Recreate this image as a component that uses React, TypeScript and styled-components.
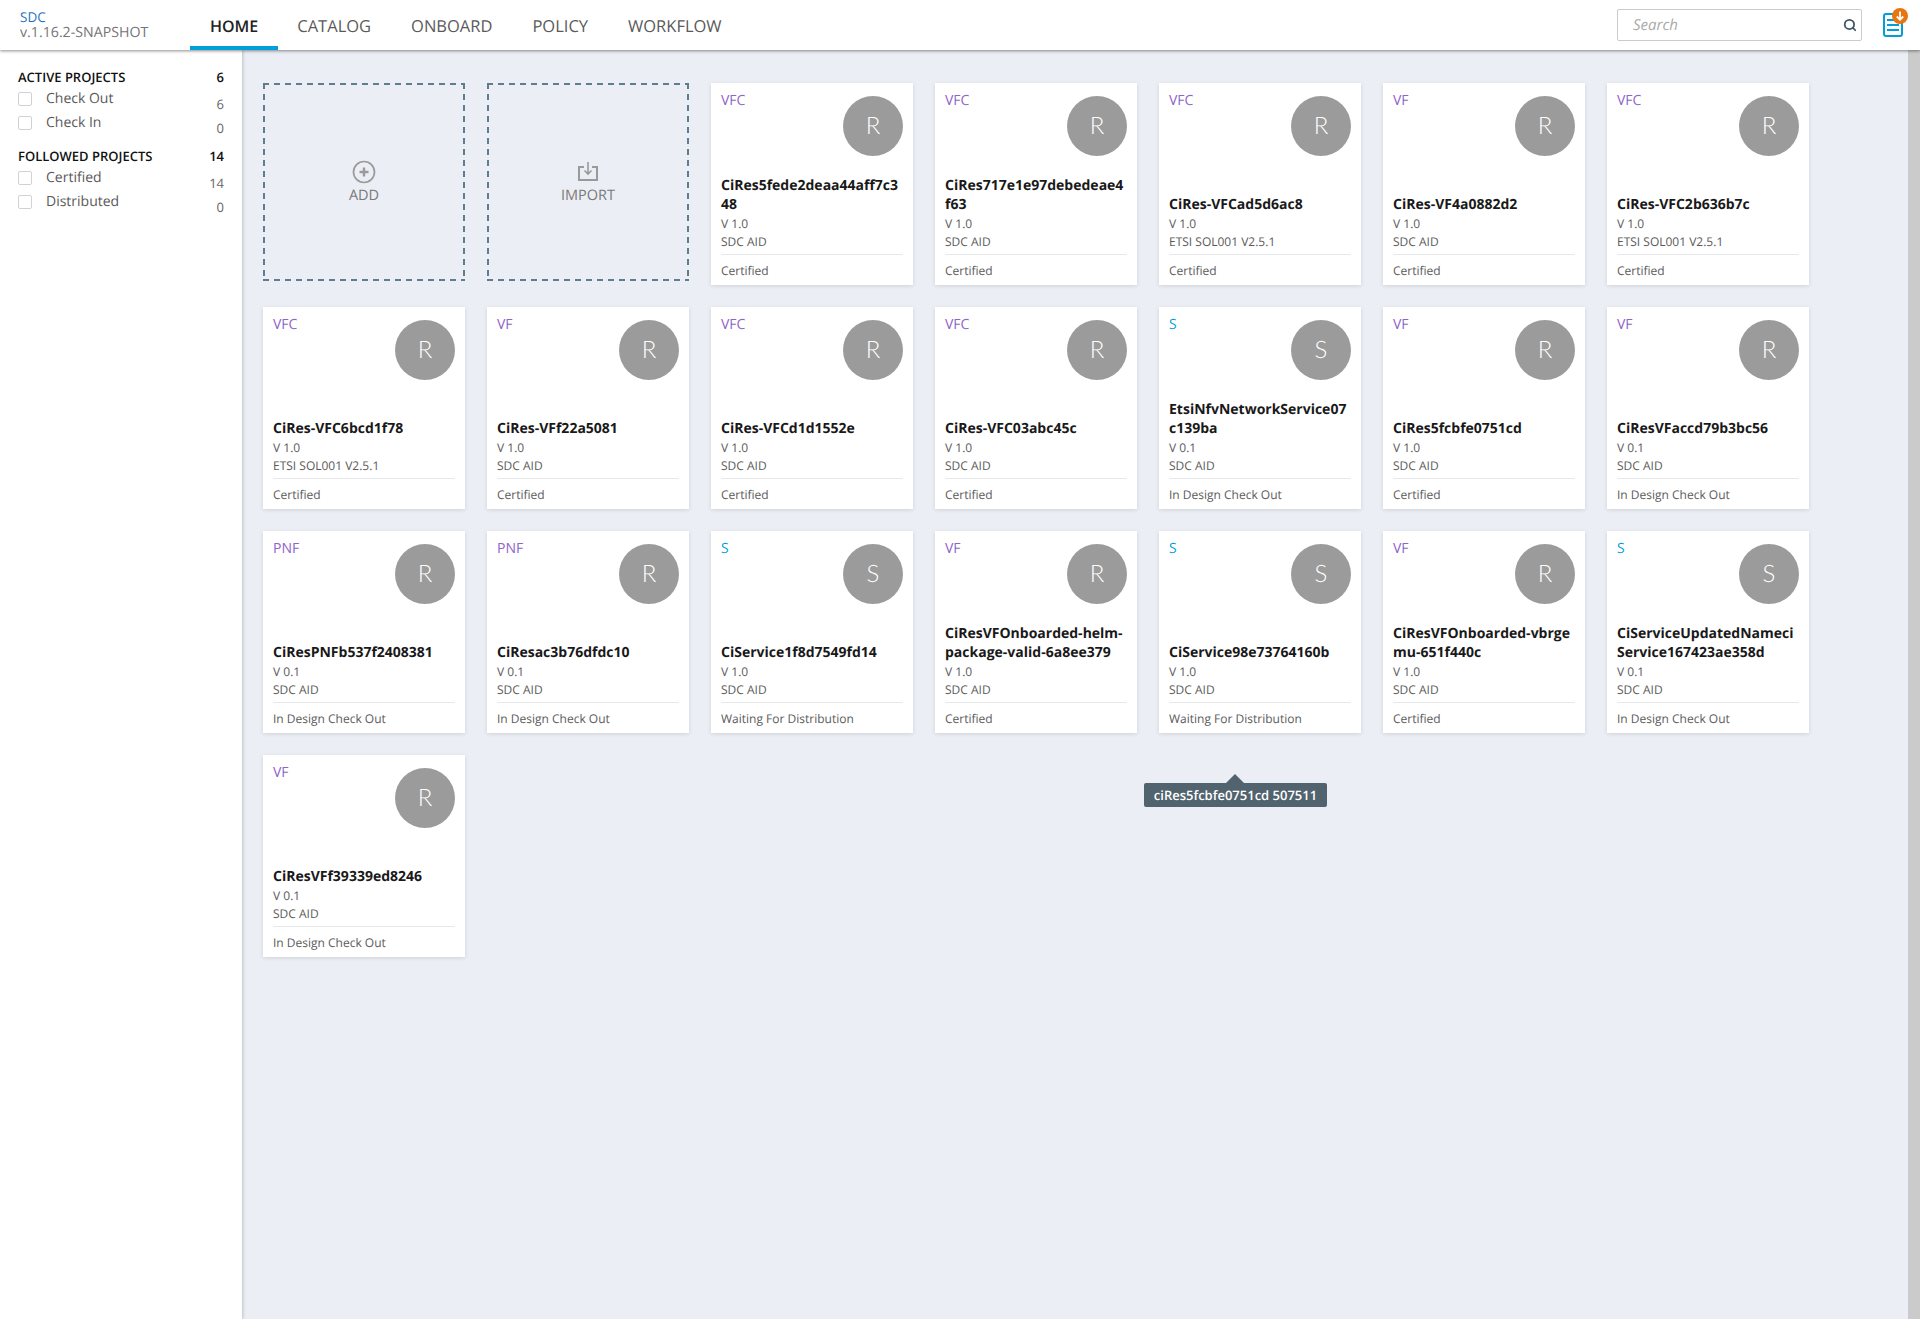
import styled, { createGlobalStyle } from "styled-components";
import { Search } from "lucide-react";

const GlobalStyle = createGlobalStyle`
    html, body {
        margin: 0;
        height: 100%;
        overflow: hidden;
        font-family: "Open Sans", "Liberation Sans", sans-serif;
        background-color: #ebeef4;
        text-rendering: geometricPrecision;
    }
    * { box-sizing: border-box; }
`;

const Page = styled.div`
    width: 1920px;
    height: 1319px;
    display: flex;
    flex-direction: column;
    position: relative;
`;
const Header = styled.header`
    height: 50px;
    flex: none;
    display: flex;
    align-items: stretch;
    background-color: #fff;
    box-shadow: 0 1px 3px rgba(0, 0, 0, 0.45);
    position: relative;
    z-index: 2;
`;
const Brand = styled.div`
    width: 190px;
    flex: none;
    padding: 10px 0 0 20px;
    font-size: 14.2px;
    line-height: 15px;
    color: #757575;
`;
const BrandName = styled.div`
    color: #1f72b8;
    font-size: 13.5px;
`;
const Nav = styled.nav`
    display: flex;
`;
const NavItem = styled.a<{ $active?: boolean }>`
    padding: 16px 20px 0;
    margin-right: ${(p) => (p.$active ? "-1px" : "0")};
    font-size: ${(p) => (p.$active ? "16px" : "16.5px")};
    line-height: 20px;
    font-weight: ${(p) => (p.$active ? 600 : 500)};
    color: ${(p) => (p.$active ? "#222" : "#5a5a5a")};
    border-bottom: 4px solid ${(p) => (p.$active ? "#009fdb" : "transparent")};
`;
const HeaderRight = styled.div`
    margin-left: auto;
    display: flex;
    align-items: flex-start;
    padding: 8px 12px 0 0;
    gap: 20px;
`;
const SearchBox = styled.div`
    width: 245px;
    height: 32px;
    margin-top: 1px;
    border: 1px solid #c8cccf;
    border-radius: 2px;
    display: flex;
    align-items: center;
    justify-content: space-between;
    padding: 0 4px 0 15px;
    font-size: 15px;
    font-style: italic;
    color: #aaa;
    svg { color: #3f5364; }
`;
const Body = styled.div`
    flex: 1;
    display: flex;
    min-height: 0;
`;
const Sidebar = styled.aside`
    width: 242px;
    flex: none;
    background-color: #fff;
    box-shadow: 1px 0 3px rgba(0, 0, 0, 0.2);
    padding: 18px 18px 0 18px;
`;
const SideGroup = styled.div`
    margin-bottom: 10px;
`;
const SideTitle = styled.div`
    display: flex;
    justify-content: space-between;
    margin-bottom: 3px;
    font-size: 13px;
    line-height: 18px;
    font-weight: 600;
    color: #111;
`;
const SideRow = styled.div`
    display: flex;
    align-items: flex-start;
    height: 24px;
    font-size: 14px;
    line-height: 20px;
    color: #5a5a5a;
`;
const CheckBox = styled.span`
    width: 14px;
    height: 14px;
    flex: none;
    margin: 3px 14px 0 0;
    border: 1px solid #d2d2d2;
    border-radius: 2px;
    background-color: #fff;
`;
const SideCount = styled.span`
    margin-left: auto;
    font-size: 13px;
    padding-top: 5px;
    color: #666;
`;
const Main = styled.main`
    flex: 1;
    padding: 33px 0 0 21px;
    display: flex;
    flex-wrap: wrap;
    align-content: flex-start;
    gap: 22px;
`;
const Card = styled.div`
    width: 202px;
    height: 202px;
    background-color: #fff;
    box-shadow: 0 1px 4px rgba(0, 0, 0, 0.12);
    padding: 0 10px;
    display: flex;
    flex-direction: column;
`;
const CardTop = styled.div`
    display: flex;
    justify-content: space-between;
    align-items: flex-start;
    height: 73px;
    padding-top: 13px;
    flex: none;
`;
const CardType = styled.div<{ $service?: boolean }>`
    font-size: 14px;
    line-height: 20px;
    margin-top: -5px;
    color: ${(p) => (p.$service ? "#009fdb" : "#9063cd")};
`;
const Avatar = styled.div`
    width: 60px;
    height: 60px;
    padding-bottom: 2px;
    border-radius: 50%;
    background-color: #9b9b9b;
    color: #fff;
    font-family: "Lato", "Open Sans", sans-serif;
    font-weight: 300;
    font-size: 24px;
    display: flex;
    align-items: center;
    justify-content: center;
`;
const CardName = styled.div`
    margin-top: auto;
    margin-bottom: 1px;
    font-size: 14px;
    line-height: 19px;
    font-weight: 700;
    color: #191919;
    word-break: break-all;
`;
const CardMeta = styled.div`
    font-size: 12px;
    line-height: 18px;
    color: #5a5a5a;
`;
const CardStatus = styled.div`
    flex: none;
    height: 31px;
    margin-top: 3px;
    border-top: 1px solid #e6e8ea;
    font-size: 12px;
    line-height: 32px;
    color: #5a5a5a;
`;
const dash = "#5f7d8e";
const ActionCard = styled.div`
    width: 202px;
    height: 198px;
    background:
        repeating-linear-gradient(90deg, ${dash} 0 6px, transparent 6px 11px) left top / 100% 2px no-repeat,
        repeating-linear-gradient(90deg, ${dash} 0 6px, transparent 6px 11px) left bottom / 100% 2px no-repeat,
        repeating-linear-gradient(180deg, ${dash} 0 6px, transparent 6px 11px) left top / 2px 100% no-repeat,
        repeating-linear-gradient(180deg, ${dash} 0 6px, transparent 6px 11px) right top / 2px 100% no-repeat;
    display: flex;
    flex-direction: column;
    align-items: center;
    justify-content: center;
    font-size: 14.5px;
    font-weight: 500;
    line-height: 18px;
    color: #7a7a7a;
    svg { display: block; margin-bottom: 3px; }
`;
const Scrollbar = styled.div`
    width: 12px;
    flex: none;
    background-color: #cbcbcb;
`;
const Tooltip = styled.div`
    position: absolute;
    left: 1144px;
    top: 783px;
    width: 183px;
    height: 24px;
    background-color: #51636f;
    border-radius: 2px;
    color: #fff;
    font-size: 13px;
    font-weight: 600;
    line-height: 24px;
    text-align: center;
    &::before {
        content: "";
        position: absolute;
        left: 82px;
        top: -9px;
        border-left: 9px solid transparent;
        border-right: 9px solid transparent;
        border-bottom: 9px solid #51636f;
    }
`;

interface CardItem {
    type: string;
    name: string;
    version: string;
    vendor: string;
    status: string;
}

const AID = "SDC AID";
const ETSI = "ETSI SOL001 V2.5.1";
const CERT = "Certified";
const OUT = "In Design Check Out";
const WAIT = "Waiting For Distribution";

const cards: CardItem[] = [
    { type: "VFC", name: "CiRes5fede2deaa44aff7c348", version: "V 1.0", vendor: AID, status: CERT },
    { type: "VFC", name: "CiRes717e1e97debedeae4f63", version: "V 1.0", vendor: AID, status: CERT },
    { type: "VFC", name: "CiRes-VFCad5d6ac8", version: "V 1.0", vendor: ETSI, status: CERT },
    { type: "VF", name: "CiRes-VF4a0882d2", version: "V 1.0", vendor: AID, status: CERT },
    { type: "VFC", name: "CiRes-VFC2b636b7c", version: "V 1.0", vendor: ETSI, status: CERT },
    { type: "VFC", name: "CiRes-VFC6bcd1f78", version: "V 1.0", vendor: ETSI, status: CERT },
    { type: "VF", name: "CiRes-VFf22a5081", version: "V 1.0", vendor: AID, status: CERT },
    { type: "VFC", name: "CiRes-VFCd1d1552e", version: "V 1.0", vendor: AID, status: CERT },
    { type: "VFC", name: "CiRes-VFC03abc45c", version: "V 1.0", vendor: AID, status: CERT },
    { type: "S", name: "EtsiNfvNetworkService07c139ba", version: "V 0.1", vendor: AID, status: OUT },
    { type: "VF", name: "CiRes5fcbfe0751cd", version: "V 1.0", vendor: AID, status: CERT },
    { type: "VF", name: "CiResVFaccd79b3bc56", version: "V 0.1", vendor: AID, status: OUT },
    { type: "PNF", name: "CiResPNFb537f2408381", version: "V 0.1", vendor: AID, status: OUT },
    { type: "PNF", name: "CiResac3b76dfdc10", version: "V 0.1", vendor: AID, status: OUT },
    { type: "S", name: "CiService1f8d7549fd14", version: "V 1.0", vendor: AID, status: WAIT },
    { type: "VF", name: "CiResVFOnboarded-helm-package-valid-6a8ee379", version: "V 1.0", vendor: AID, status: CERT },
    { type: "S", name: "CiService98e73764160b", version: "V 1.0", vendor: AID, status: WAIT },
    { type: "VF", name: "CiResVFOnboarded-vbrgemu-651f440c", version: "V 1.0", vendor: AID, status: CERT },
    { type: "S", name: "CiServiceUpdatedNameciService167423ae358d", version: "V 0.1", vendor: AID, status: OUT },
    { type: "VF", name: "CiResVFf39339ed8246", version: "V 0.1", vendor: AID, status: OUT },
];

const navItems = ["HOME", "CATALOG", "ONBOARD", "POLICY", "WORKFLOW"];

const sideGroups = [
    { title: "ACTIVE PROJECTS", count: 6, rows: [["Check Out", 6], ["Check In", 0]] },
    { title: "FOLLOWED PROJECTS", count: 14, rows: [["Certified", 14], ["Distributed", 0]] },
];

function AddIcon() {
    return (
        <svg width="24" height="24" viewBox="0 0 24 24" fill="none" stroke="#9a9a9a">
            <circle cx="12" cy="12" r="10.5" strokeWidth="1.7" />
            <path d="M12 7.5v9M7.5 12h9" strokeWidth="2.4" />
        </svg>
    );
}

function ImportIcon() {
    return (
        <svg width="24" height="24" viewBox="0 0 24 24" fill="none" stroke="#9a9a9a" strokeWidth="2">
            <path d="M8 7H3v13h18V7h-5" />
            <path d="M12 2v12M8.5 10.5l3.5 3.5 3.5-3.5" strokeWidth="1.6" />
        </svg>
    );
}

function DocIcon() {
    return (
        <svg width="26" height="32" viewBox="0 0 26 32" fill="none">
            <rect x="2" y="6" width="18" height="22" rx="2" stroke="#009fdb" strokeWidth="2" fill="#fff" />
            <path d="M5 12h12M5 17h12M5 22h12" stroke="#009fdb" strokeWidth="2" />
            <circle cx="18" cy="8" r="8" fill="#e8760f" />
            <path d="M18 3.5v8M14.8 8.5l3.2 3.2 3.2-3.2" stroke="#fff" strokeWidth="1.8" />
        </svg>
    );
}

export default function App() {
    return (
        <Page>
            <GlobalStyle />
            <Header>
                <Brand>
                    <BrandName>SDC</BrandName>
                    v.1.16.2-SNAPSHOT
                </Brand>
                <Nav>
                    {navItems.map((item, index) => (
                        <NavItem key={item} $active={index === 0}>{item}</NavItem>
                    ))}
                </Nav>
                <HeaderRight>
                    <SearchBox>
                        Search
                        <Search size={14} strokeWidth={3} />
                    </SearchBox>
                    <DocIcon />
                </HeaderRight>
            </Header>
            <Body>
                <Sidebar>
                    {sideGroups.map((group) => (
                        <SideGroup key={group.title}>
                            <SideTitle>
                                <span>{group.title}</span>
                                <span>{group.count}</span>
                            </SideTitle>
                            {group.rows.map(([label, count]) => (
                                <SideRow key={label}>
                                    <CheckBox />
                                    {label}
                                    <SideCount>{count}</SideCount>
                                </SideRow>
                            ))}
                        </SideGroup>
                    ))}
                </Sidebar>
                <Main>
                    <ActionCard>
                        <AddIcon />
                        ADD
                    </ActionCard>
                    <ActionCard>
                        <ImportIcon />
                        IMPORT
                    </ActionCard>
                    {cards.map((item) => {
                        const isService = item.type === "S";
                        return (
                            <Card key={item.name}>
                                <CardTop>
                                    <CardType $service={isService}>{item.type}</CardType>
                                    <Avatar>{isService ? "S" : "R"}</Avatar>
                                </CardTop>
                                <CardName>{item.name}</CardName>
                                <CardMeta>{item.version}</CardMeta>
                                <CardMeta>{item.vendor}</CardMeta>
                                <CardStatus>{item.status}</CardStatus>
                            </Card>
                        );
                    })}
                </Main>
                <Scrollbar />
            </Body>
            <Tooltip>ciRes5fcbfe0751cd 507511</Tooltip>
        </Page>
    );
}
